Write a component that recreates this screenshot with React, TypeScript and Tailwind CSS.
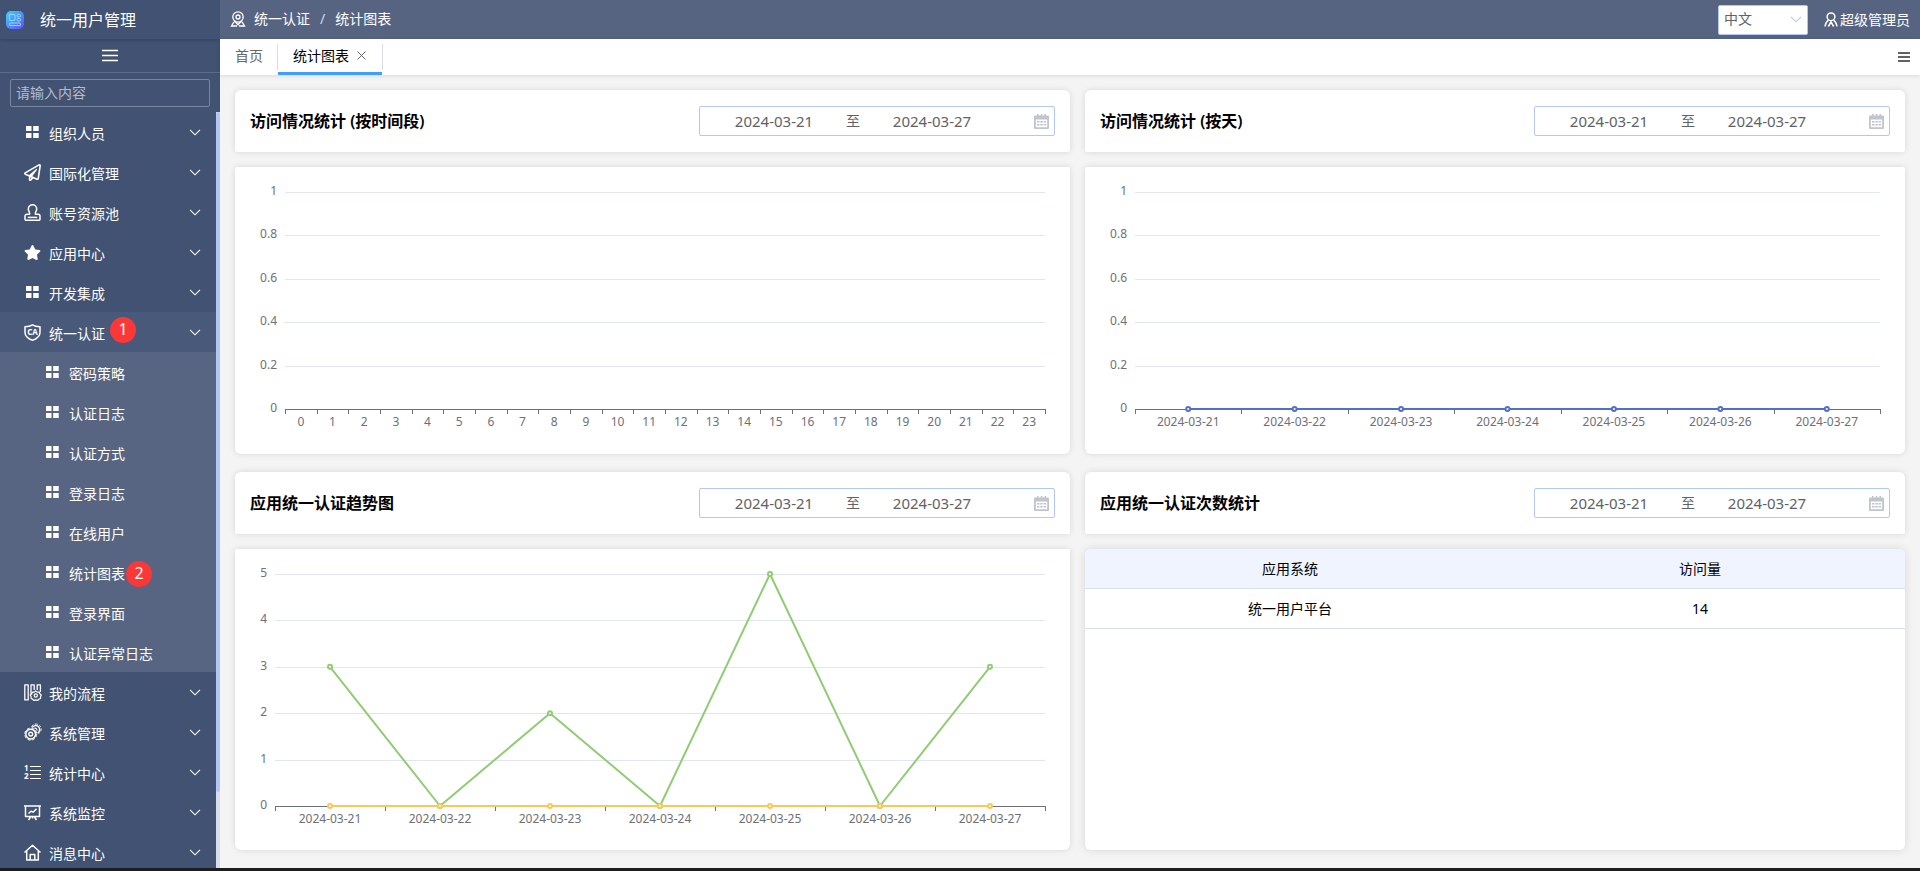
import { useEffect, useLayoutEffect, useRef, useState } from "react";
import type { ReactNode } from "react";
import { FaRegPaperPlane, FaStar } from "react-icons/fa";

type MenuItem = {
  label: string;
  icon: ReactNode;
  badge?: string;
  children?: { label: string; badge?: string }[];
};

type Series = { color: string; values: number[] };

const DAYS = [
  "2024-03-21",
  "2024-03-22",
  "2024-03-23",
  "2024-03-24",
  "2024-03-25",
  "2024-03-26",
  "2024-03-27",
];
const HOURS = Array.from({ length: 24 }, (_, i) => String(i));

function GridIcon() {
  return (
    <svg viewBox="0 0 13 12" className="h-3 w-[13px] shrink-0" fill="currentColor">
      <path d="M0 0h5.5v5H0zM7.2 0h5.500v5H7.200zM0 7h5.500v5H0zM7.200 7h5.500v5H7.200z" />
    </svg>
  );
}

function LineIcon({ children }: { children: ReactNode }) {
  return (
    <svg
      viewBox="0 0 17 17"
      className="h-[17px] w-[17px] shrink-0 overflow-visible"
      fill="none"
      stroke="currentColor"
      strokeWidth="1.5"
      strokeLinejoin="round"
    >
      {children}
    </svg>
  );
}

const AccountIcon = () => (
  <LineIcon>
    <path d="M5.6 10.2C6.4 8.8 4.3 7.2 4.3 4.9a4.2 4.2 0 0 1 8.4 0c0 2.3-2.1 3.9-1.3 5.3H14a2 2 0 0 1 2 2v3.1a.9.9 0 0 1-.9.9H1.9a.9.9 0 0 1-.9-.9v-3.1a2 2 0 0 1 2-2z" />
    <path d="M3.8 13.4h9.4" />
  </LineIcon>
);

const ShieldIcon = () => (
  <LineIcon>
    <path d="M8.5.9c2 1.3 4.5 1.8 7.5 1.8v5.6c0 3.7-2.8 6.4-7.5 8-4.7-1.6-7.5-4.3-7.5-8V2.7c3 0 5.500-.5 7.500-1.800z" />
    <text x="8.5" y="11" textAnchor="middle" fontSize="8" fontWeight="700" fill="currentColor" stroke="none">
      CA
    </text>
  </LineIcon>
);

const FlowIcon = () => (
  <LineIcon>
    <path d="M.8.9h3.4v15H.8zM7 10V.9h3.2v5M13.2 5.9V.9h3.2v7" strokeWidth="1.3" />
    <path
      d="M11.8 6.9l1.5 1.2 1.9-.1.6 1.8 1.5 1.2-.8 1.7.1 1.8-1.7.6-1.2 1.4-1.9-.6-1.9.6-1.2-1.4-1.7-.6.1-1.8-.8-1.7 1.5-1.2.6-1.8 1.9.1z"
      strokeWidth="1.2"
    />
    <circle cx="11.8" cy="11.5" r="1.6" strokeWidth="1.2" />
  </LineIcon>
);

// teeth are the dashes of an outer ring
const GearsIcon = () => (
  <LineIcon>
    <circle cx="6.7" cy="10.1" r="4.9" strokeWidth="1.5" />
    <circle cx="6.7" cy="10.1" r="6" strokeWidth="1" strokeDasharray="3 1.7" />
    <circle cx="6.7" cy="10.1" r="1.9" strokeWidth="1.4" />
    <path d="M8.2 3.6a4 4 0 1 1 5.4 5.5" strokeWidth="1.3" />
    <path d="M7.6 2.6a5.1 5.1 0 1 1 6.9 7" strokeWidth="1" strokeDasharray="2.6 1.5" />
    <path d="M10.3 4.3a2 2 0 0 1 2.6 2.4" strokeWidth="1.1" />
  </LineIcon>
);

const OrderedIcon = () => (
  <LineIcon>
    <path d="M6 2.5h11M6 6.5h11M6 10.5h11M6 14.5h11" strokeWidth="1.2" />
    <text x="0" y="7" fontSize="8" fontWeight="700" fill="currentColor" stroke="none">
      1
    </text>
    <text x="0" y="15" fontSize="8" fontWeight="700" fill="currentColor" stroke="none">
      2
    </text>
  </LineIcon>
);

const MonitorIcon = () => (
  <LineIcon>
    <path d="M0 2h17M1.5 2v10.5h14V2M6.5 13l-2 3M10.5 13l2 3M8.5 12.5v2" />
    <path d="M4.5 9.5l2.5-2.3 2 1 3.5-3.3" />
  </LineIcon>
);

const HomeIcon = () => (
  <LineIcon>
    <path d="M.5 8.5l8-7.3 8 7.3M2.7 7v9h11.6V7M6.2 16v-5.5h4.6V16" />
  </LineIcon>
);

const MENU: MenuItem[] = [
  { label: "组织人员", icon: <GridIcon /> },
  { label: "国际化管理", icon: <FaRegPaperPlane size={17} /> },
  { label: "账号资源池", icon: <AccountIcon /> },
  { label: "应用中心", icon: <FaStar size={17} /> },
  { label: "开发集成", icon: <GridIcon /> },
  {
    label: "统一认证",
    icon: <ShieldIcon />,
    badge: "1",
    children: [
      { label: "密码策略" },
      { label: "认证日志" },
      { label: "认证方式" },
      { label: "登录日志" },
      { label: "在线用户" },
      { label: "统计图表", badge: "2" },
      { label: "登录界面" },
      { label: "认证异常日志" },
    ],
  },
  { label: "我的流程", icon: <FlowIcon /> },
  { label: "系统管理", icon: <GearsIcon /> },
  { label: "统计中心", icon: <OrderedIcon /> },
  { label: "系统监控", icon: <MonitorIcon /> },
  { label: "消息中心", icon: <HomeIcon /> },
];

function Chevron() {
  return (
    <svg viewBox="0 0 12 7" className="h-[7px] w-3" fill="none" stroke="currentColor" strokeWidth="1.1">
      <path d="M1 .8l5 5 5-5" />
    </svg>
  );
}

function Badge({ className, children }: { className: string; children: ReactNode }) {
  return (
    <span
      className={`absolute left-full flex h-[26px] w-[26px] items-center justify-center rounded-full bg-[#fb3838] pb-0.5 text-base leading-4 ${className}`}
    >
      {children}
    </span>
  );
}

function Sidebar() {
  return (
    <aside className="flex w-[220px] shrink-0 flex-col bg-[#415272] text-white">
      <div className="flex h-[39px] shrink-0 items-center gap-4 pl-1.5 shadow-[0_1px_3px_rgba(0,21,41,0.25)]">
        <svg viewBox="0 0 18 18" className="h-[18px] w-[18px]">
          <defs>
            <linearGradient id="logo" x1="0" y1="0" x2="1" y2="1">
              <stop offset="0" stopColor="#46d3fb" />
              <stop offset="0.5" stopColor="#4a92fb" />
              <stop offset="1" stopColor="#6d48f2" />
            </linearGradient>
          </defs>
          <rect width="18" height="18" rx="5" fill="url(#logo)" />
          <g fill="none" stroke="#8fdcff" strokeWidth="1">
            <rect x="3.5" y="3.5" width="5.5" height="6" rx="0.5" />
            <rect x="11" y="3.5" width="3.5" height="2.5" rx="1" />
            <rect x="11" y="7.5" width="3.5" height="2.5" rx="1" />
            <rect x="3.5" y="12" width="11" height="2.5" rx="0.5" />
          </g>
        </svg>
        <span className="text-base leading-5">统一用户管理</span>
      </div>
      <button
        type="button"
        aria-label="折叠菜单"
        className="flex h-[34px] shrink-0 items-center justify-center border-b border-[#5d6c89]"
      >
        <svg viewBox="0 0 16 13" className="h-[13px] w-4" stroke="currentColor" strokeWidth="1.3">
          <path d="M0 1.5h16M0 6.5h16M0 11.5h16" />
        </svg>
      </button>
      <div className="shrink-0 px-2.5 pt-1.5 pb-[5px]">
        <input
          type="text"
          aria-label="请输入内容"
          placeholder="请输入内容"
          className="block h-7 w-full rounded-xs border border-[#7a869d] bg-transparent px-[5px] pb-0.5 text-sm placeholder:text-[#b5bcc9] focus:outline-none"
        />
      </div>
      <div className="flex min-h-0 flex-1">
        <nav className="min-w-0 flex-1 overflow-y-auto text-sm leading-5 [scrollbar-width:none]">
          {MENU.map((item) => (
            <div key={item.label}>
              <button
                type="button"
                className={
                  item.children
                    ? "flex h-10 w-full items-center bg-[#495979] pr-[15px] pl-6"
                    : "flex h-10 w-full items-center pr-[15px] pl-6"
                }
              >
                <span className="mr-2 flex w-[17px] shrink-0 justify-center">{item.icon}</span>
                <span className="relative pt-[3px]">
                  {item.label}
                  {item.badge && <Badge className="-top-1 ml-[5px]">{item.badge}</Badge>}
                </span>
                <span className="ml-auto">
                  <Chevron />
                </span>
              </button>
              {item.children && (
                <ul className="bg-[#576582]">
                  {item.children.map((child) => (
                    <li key={child.label}>
                      <a href="#" className="flex h-10 items-center gap-2.5 pl-[46px]">
                        <GridIcon />
                        <span className="relative pt-[3px]">
                          {child.label}
                          {child.badge && <Badge className="top-0 ml-px">{child.badge}</Badge>}
                        </span>
                      </a>
                    </li>
                  ))}
                </ul>
              )}
            </div>
          ))}
        </nav>
        <div className="w-1 bg-[#d9deed]">
          <div className="h-[90%] rounded-xs bg-[#b3c7f6]" />
        </div>
      </div>
    </aside>
  );
}

function TopBar() {
  return (
    <header className="flex h-[39px] shrink-0 items-center bg-[#566482] pr-2.5 pl-2.5 text-sm leading-5 text-white">
      <nav aria-label="位置" className="flex items-center pb-0.5">
        <svg viewBox="0 0 16 16" className="mr-2 h-4 w-4" fill="none" stroke="currentColor" strokeWidth="1.3">
          <circle cx="8" cy="6" r="5.2" />
          <circle cx="8" cy="6" r="2" />
          <path d="M4.5 10L8 13.8 11.5 10M4 10.8L1.5 15H7M12 10.8l2.5 4.2H9" />
        </svg>
        <a href="#">统一认证</a>
        <span className="mx-2.5 text-[#d5d9e2]">/</span>
        <span>统计图表</span>
      </nav>
      <div className="relative mr-4 ml-auto">
        <select
          aria-label="语言"
          className="block h-[30px] w-[90px] appearance-none rounded-xs border border-[#b3c7f0] bg-white pb-0.5 pl-[5px] text-sm text-[#606266]"
        >
          <option>中文</option>
          <option>English</option>
        </select>
        <span className="pointer-events-none absolute top-[11px] right-1.5 text-[#b3c7f0]">
          <Chevron />
        </span>
      </div>
      <button type="button" className="flex items-center gap-0.5">
        <svg viewBox="0 0 14 15" className="h-[15px] w-3.5" fill="none" stroke="currentColor" strokeWidth="1.5">
          <circle cx="7" cy="4.8" r="3.9" />
          <path d="M4.5 8.2C2.5 9.5 1.5 11.5 1 14.5M9.5 8.2c2 1.3 3 3.3 3.5 6.3M4.3 14.5L7 10l2.7 4.5" />
        </svg>
        超级管理员
      </button>
    </header>
  );
}

function Tabs() {
  return (
    <div className="relative flex h-9 shrink-0 items-stretch bg-white text-sm leading-5 shadow-[0_1px_4px_rgba(0,21,41,0.12)]">
      <button type="button" className="my-[5px] border-r border-[#d8dce5] pr-3.5 pb-0.5 pl-[15px] text-[#666]">
        首页
      </button>
      <div className="flex items-center border-b-3 border-[#409eff]">
        <button type="button" className="pl-[15px] text-black">
          统计图表
        </button>
        <button type="button" aria-label="关闭" className="flex h-5 items-center pr-4 pl-2 text-[#666]">
          <svg viewBox="0 0 9 9" className="h-[9px] w-[9px]" stroke="currentColor" strokeWidth="1">
            <path d="M.5.5l8 8M8.5.5l-8 8" />
          </svg>
        </button>
      </div>
      <div className="my-[5px] w-px bg-[#d8dce5]" />
      <button type="button" aria-label="更多" className="ml-auto pr-2.5 text-[#606266]">
        <svg viewBox="0 0 12 10" className="h-2.5 w-3" stroke="currentColor" strokeWidth="2">
          <path d="M0 1h12M0 5h12M0 9h12" />
        </svg>
      </button>
    </div>
  );
}

function DateRange({ label }: { label: string }) {
  const input = "w-[130px] min-w-0 bg-transparent text-center text-[15px] leading-5 focus:outline-none";
  return (
    <div className="flex h-[30px] w-[356px] items-center rounded-xs border border-[#b3c7f0] pr-[5px] pl-[9px] text-sm text-[#606266]">
      <input type="text" aria-label={label + " 开始日期"} defaultValue="2024-03-21" className={input} />
      <span className="w-7 text-center">至</span>
      <input type="text" aria-label={label + " 结束日期"} defaultValue="2024-03-27" className={input} />
      <svg viewBox="0 0 15 15" className="ml-auto h-[15px] w-[15px]" fill="#c0c4cc">
        <path
          fillRule="evenodd"
          d="M1 1.5h13a1 1 0 0 1 1 1V14a1 1 0 0 1-1 1H1a1 1 0 0 1-1-1V2.5a1 1 0 0 1 1-1zM1.8 5.5v7.7h11.4V5.5z"
        />
        <path d="M3 0h1.5v4H3zM6.8 0h1.5v4H6.8zM10.5 0H12v4h-1.5zM3 7h2.5v1.5H3zM6.3 7h2.5v1.5H6.3zM9.6 7h2.5v1.5H9.6zM3 10h2.5v1.5H3zM6.3 10h2.5v1.5H6.3zM9.6 10h2.5v1.5H9.6z" />
      </svg>
    </div>
  );
}

function Panel({ title, children }: { title: string; children: ReactNode }) {
  return (
    <section>
      <div className="mb-[15px] flex h-[62px] items-center justify-between rounded-t-md rounded-b-xs bg-white px-[15px] shadow-[0_0_6px_rgba(0,0,0,0.12)]">
        <h2 className="text-base leading-5 font-semibold text-black">{title}</h2>
        <DateRange label={title} />
      </div>
      {children}
    </section>
  );
}

type ChartProps = {
  height: number;
  left: number;
  axisY: number;
  labels: string[];
  ticks: number[];
  series?: Series[];
};

function LineChart({ height, left, axisY, labels, ticks, series = [] }: ChartProps) {
  const ref = useRef<HTMLDivElement>(null);
  const [width, setWidth] = useState(800);

  useLayoutEffect(() => {
    if (ref.current) setWidth(ref.current.clientWidth);
  }, []);

  useEffect(() => {
    if (!ref.current) return;
    const observer = new ResizeObserver(([entry]) => setWidth(Math.round(entry.contentRect.width)));
    observer.observe(ref.current);
    return () => observer.disconnect();
  }, []);

  const top = 25;
  const right = width - 25;
  const max = ticks[ticks.length - 1];
  const step = (right - left) / labels.length;
  const x = (i: number) => left + step * (i + 0.5);
  const y = (v: number) => axisY - (v / max) * (axisY - top);
  const snap = (v: number) => Math.round(v) + 0.5;

  return (
    <div ref={ref} className="overflow-hidden rounded-t-xs rounded-b-md bg-white shadow-[0_0_6px_rgba(0,0,0,0.12)]">
      <svg width={width} height={height} className="block text-xs" fill="#6e7079">
        {ticks.map((t) => (
          <g key={t}>
            {t > 0 && <line x1={left} x2={right} y1={snap(y(t))} y2={snap(y(t))} stroke="#e0e6f1" />}
            <text x={left - 8} y={y(t) + 3} textAnchor="end">
              {t}
            </text>
          </g>
        ))}
        <line x1={left} x2={right + 1} y1={axisY + 0.5} y2={axisY + 0.5} stroke="#6e7079" />
        {[...labels, ""].map((label, i) => (
          <line
            key={label}
            x1={snap(left + step * i)}
            x2={snap(left + step * i)}
            y1={axisY}
            y2={axisY + 5}
            stroke="#6e7079"
          />
        ))}
        {labels.map((label, i) => (
          <text key={label} x={x(i)} y={axisY + 17} textAnchor="middle">
            {label}
          </text>
        ))}
        {series.map((s) => (
          <g key={s.color} fill="none" stroke={s.color} strokeWidth="2">
            <polyline points={s.values.map((v, i) => `${x(i)},${y(v)}`).join(" ")} strokeLinejoin="bevel" />
            {s.values.map((v, i) => (
              <circle key={i} cx={x(i)} cy={y(v)} r="2" fill="#fff" />
            ))}
          </g>
        ))}
      </svg>
    </div>
  );
}

function CountTable() {
  return (
    <div className="h-[301px] overflow-hidden rounded-md bg-white shadow-[0_0_10px_rgba(0,0,0,0.12)]">
      <table className="w-full table-fixed border-separate border-spacing-0 text-center text-sm leading-5 text-black">
        <thead className="bg-[#f0f4ff]">
          <tr>
            <th className="h-10 border-b border-[#d9e1f0] font-normal">应用系统</th>
            <th className="h-10 border-b border-[#d9e1f0] font-normal">访问量</th>
          </tr>
        </thead>
        <tbody>
          <tr>
            <td className="h-10 border-b border-[#d9e1f0]">统一用户平台</td>
            <td className="h-10 border-b border-[#d9e1f0]">14</td>
          </tr>
        </tbody>
      </table>
    </div>
  );
}

export default function App() {
  return (
    <div className="flex h-screen flex-col bg-[#f4f4f4] font-['Noto_Sans','Noto_Sans_CJK_SC',sans-serif]">
      <div className="flex min-h-0 flex-1">
        <Sidebar />
        <div className="flex min-w-0 flex-1 flex-col">
          <TopBar />
          <Tabs />
          <main className="grid min-h-0 flex-1 grid-cols-2 content-start gap-y-[18px] overflow-y-auto pt-[15px]">
            <div className="pl-[15px]">
              <Panel title="访问情况统计 (按时间段)">
                <LineChart height={287} left={50} axisY={242} labels={HOURS} ticks={[0, 0.2, 0.4, 0.6, 0.8, 1]} />
              </Panel>
            </div>
            <div className="px-[15px]">
              <Panel title="访问情况统计 (按天)">
                <LineChart
                  height={287}
                  left={50}
                  axisY={242}
                  labels={DAYS}
                  ticks={[0, 0.2, 0.4, 0.6, 0.8, 1]}
                  series={[{ color: "#5470c6", values: [0, 0, 0, 0, 0, 0, 0] }]}
                />
              </Panel>
            </div>
            <div className="pl-[15px]">
              <Panel title="应用统一认证趋势图">
                <LineChart
                  height={301}
                  left={40}
                  axisY={257}
                  labels={DAYS}
                  ticks={[0, 1, 2, 3, 4, 5]}
                  series={[
                    { color: "#91cc75", values: [3, 0, 2, 0, 5, 0, 3] },
                    { color: "#fac858", values: [0, 0, 0, 0, 0, 0, 0] },
                  ]}
                />
              </Panel>
            </div>
            <div className="px-[15px]">
              <Panel title="应用统一认证次数统计">
                <CountTable />
              </Panel>
            </div>
          </main>
        </div>
      </div>
      <div className="h-[3px] shrink-0 bg-[#1d1d1f]" />
    </div>
  );
}
